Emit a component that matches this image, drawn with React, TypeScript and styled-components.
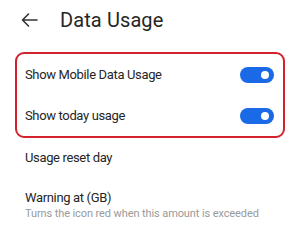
import React from "react";
import styled, { createGlobalStyle } from "styled-components";

const Global = createGlobalStyle`
  html, body { margin: 0; padding: 0; background: #ffffff; }
  body { font-family: Roboto, "Noto Sans", sans-serif; -webkit-font-smoothing: antialiased; }
`;

const Page = styled.div`
  width: 300px;
  height: 232px;
  background: #fff;
  display: flex;
  flex-direction: column;
  overflow: hidden;
`;

const Header = styled.div`
  height: 40px;
  display: flex;
  align-items: center;
  padding-left: 21px;
  gap: 22px;
`;

const Title = styled.div`
  font-size: 20px;
  color: #262626;
  letter-spacing: 0.1px;
`;

const Highlight = styled.div`
  margin: 13px 15px 0 15px;
  border: 2px solid #d3222d;
  border-radius: 9px;
  display: flex;
  flex-direction: column;
`;

const ToggleRow = styled.div`
  height: 41px;
  display: flex;
  align-items: center;
  justify-content: space-between;
  padding: 0 9px 0 8px;
`;

const Label = styled.div`
  font-size: 13px;
  color: #262626;
  letter-spacing: -0.35px;
`;

const Switch = styled.div<{ on: boolean }>`
  width: 34px;
  height: 16px;
  border-radius: 8px;
  background: ${(p) => (p.on ? "#1a6ae8" : "#bbb")};
  position: relative;
  &::after {
    content: "";
    position: absolute;
    top: 4px;
    ${(p) => (p.on ? "right: 5px;" : "left: 5px;")}
    width: 8px;
    height: 8px;
    border-radius: 50%;
    background: #fff;
  }
`;

const Item = styled.div<{ h: number }>`
  height: ${(p) => p.h}px;
  display: flex;
  flex-direction: column;
  justify-content: center;
  padding-left: 25px;
`;

const Sub = styled.div`
  font-size: 11px;
  color: #9a9a9a;
  margin-top: 2px;
  letter-spacing: -0.1px;
`;

export default function App() {
  return (
    <Page>
      <Global />
      <Header>
        <svg width="17" height="14" viewBox="0 0 17 14" fill="none">
          <path d="M16 7H1.5M7.5 1L1.5 7l6 6" stroke="#333" strokeWidth="1.6" strokeLinecap="round" strokeLinejoin="round" />
        </svg>
        <Title>Data Usage</Title>
      </Header>
      <Highlight>
        <ToggleRow>
          <Label>Show Mobile Data Usage</Label>
          <Switch on />
        </ToggleRow>
        <ToggleRow>
          <Label>Show today usage</Label>
          <Switch on />
        </ToggleRow>
      </Highlight>
      <Item h={40}>
        <Label>Usage reset day</Label>
      </Item>
      <Item h={56}>
        <Label>Warning at (GB)</Label>
        <Sub>Turns the icon red when this amount is exceeded</Sub>
      </Item>
    </Page>
  );
}
